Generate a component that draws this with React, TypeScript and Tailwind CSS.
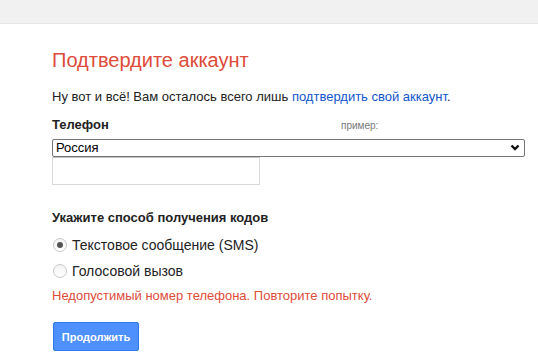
import { useState } from 'react'

function Radio({ checked, label, onClick }: { checked: boolean; label: string; onClick: () => void }) {
  return (
    <label className="flex items-center h-[16px] cursor-pointer" onClick={onClick}>
      <span className="ml-[1px] w-[14px] h-[14px] rounded-full border border-[#c8c8c8] bg-gradient-to-b from-[#f4f4f4] to-white flex items-center justify-center">
        {checked && <span className="w-[6px] h-[6px] rounded-full bg-[#555]" />}
      </span>
      <span className="ml-[5px] text-[14px] text-[#222]">{label}</span>
    </label>
  )
}

export default function App() {
  const [method, setMethod] = useState<'sms' | 'voice'>('sms')

  return (
    <div className="min-h-[360px] bg-white font-['Liberation_Sans',Arial,sans-serif] text-[13px] leading-[16px] text-[#222]">
      <div className="h-[24px] bg-[#f1f1f1] border-b border-[#e5e5e5]" />

      <div className="pl-[52px] pr-[13px]">
        <h1 className="mt-[25px] text-[20px] leading-[23px] text-[#dd4b39]">Подтвердите аккаунт</h1>

        <p className="mt-[17px]">
          Ну вот и всё! Вам осталось всего лишь <a href="#" className="text-[#15c]">подтвердить свой аккаунт</a>.
        </p>

        <div className="mt-[12px] h-[16px] flex items-baseline">
          <div className="w-[289px] font-bold">Телефон</div>
          <div className="text-[10px] leading-[16px] text-[#777]">пример:</div>
        </div>

        <div className="relative mt-[6px]">
          <select className="w-full h-[18px] appearance-none border border-[#767676] rounded-[2px] pl-[3px] text-[13px] leading-[16px] text-black bg-white">
            <option>Россия</option>
          </select>
          <svg className="absolute right-[5px] top-[5px] pointer-events-none" width="10" height="8" viewBox="0 0 10 8">
            <path d="M1.5 1.5 L5 5 L8.5 1.5" fill="none" stroke="#111" strokeWidth="2.4" />
          </svg>
        </div>

        <input type="tel" className="block w-[208px] h-[28px] border border-[#d9d9d9] border-t-[#c0c0c0] px-[6px] text-[13px] outline-none" />

        <div className="mt-[25px] font-bold">Укажите способ получения кодов</div>

        <div className="mt-[11px] flex flex-col gap-[10px]">
          <Radio checked={method === 'sms'} label="Текстовое сообщение (SMS)" onClick={() => setMethod('sms')} />
          <Radio checked={method === 'voice'} label="Голосовой вызов" onClick={() => setMethod('voice')} />
        </div>

        <div className="mt-[9px] text-[#dd4b39]">Недопустимый номер телефона. Повторите попытку.</div>

        <button className="mt-[18px] ml-[1px] w-[86px] h-[29px] rounded-[2px] border border-[#3079ed] bg-[#4d90fe] text-[11px] font-bold text-white">
          Продолжить
        </button>
      </div>
    </div>
  )
}
